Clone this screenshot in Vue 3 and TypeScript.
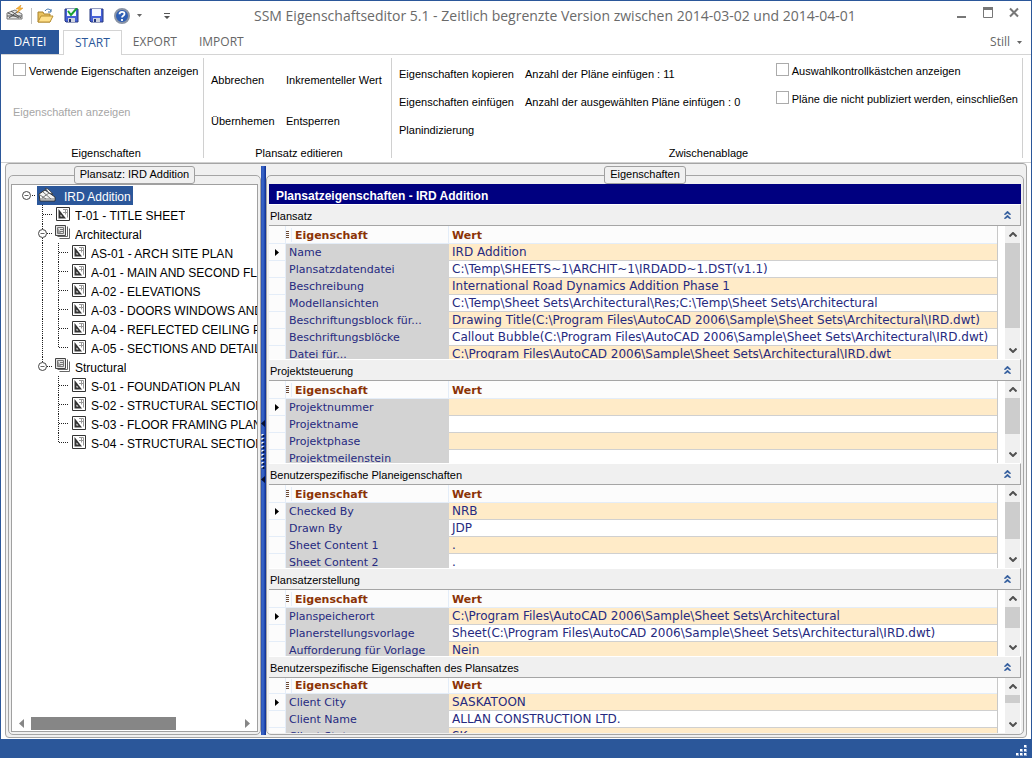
<script setup lang="ts">
import { ref } from 'vue'

type NodeKind = 'set' | 'folder' | 'sheet'

interface TreeNode {
  label: string
  kind: NodeKind
  depth: number
  trunk?: boolean
  last?: boolean
}

interface Section {
  title: string
  grow: number
  thumb: number
  rest: number
  compact?: boolean
  rows: [string, string][]
}

const nodes: TreeNode[] = [
  { label: 'IRD Addition', kind: 'set', depth: 0 },
  { label: 'T-01 - TITLE SHEET', kind: 'sheet', depth: 1 },
  { label: 'Architectural', kind: 'folder', depth: 1 },
  { label: 'AS-01 - ARCH SITE PLAN', kind: 'sheet', depth: 2, trunk: true },
  { label: 'A-01 - MAIN AND SECOND FLOOR PLAN', kind: 'sheet', depth: 2, trunk: true },
  { label: 'A-02 - ELEVATIONS', kind: 'sheet', depth: 2, trunk: true },
  { label: 'A-03 - DOORS WINDOWS AND ROOMS', kind: 'sheet', depth: 2, trunk: true },
  { label: 'A-04 - REFLECTED CEILING PLAN', kind: 'sheet', depth: 2, trunk: true },
  { label: 'A-05 - SECTIONS AND DETAILS', kind: 'sheet', depth: 2, trunk: true, last: true },
  { label: 'Structural', kind: 'folder', depth: 1, last: true },
  { label: 'S-01 - FOUNDATION PLAN', kind: 'sheet', depth: 2 },
  { label: 'S-02 - STRUCTURAL SECTIONS', kind: 'sheet', depth: 2 },
  { label: 'S-03 - FLOOR FRAMING PLAN', kind: 'sheet', depth: 2 },
  { label: 'S-04 - STRUCTURAL SECTIONS', kind: 'sheet', depth: 2, last: true },
]

const guideWidth = [25, 43, 59]
const selected = ref(0)

const sections: Section[] = [
  {
    title: 'Plansatz', grow: 133, thumb: 85, rest: 14,
    rows: [
      ['Name', 'IRD Addition'],
      ['Plansatzdatendatei', 'C:\\Temp\\SHEETS~1\\ARCHIT~1\\IRDADD~1.DST(v1.1)'],
      ['Beschreibung', 'International Road Dynamics Addition Phase 1'],
      ['Modellansichten', 'C:\\Temp\\Sheet Sets\\Architectural\\Res;C:\\Temp\\Sheet Sets\\Architectural'],
      ['Beschriftungsblock für...', 'Drawing Title(C:\\Program Files\\AutoCAD 2006\\Sample\\Sheet Sets\\Architectural\\IRD.dwt)'],
      ['Beschriftungsblöcke', 'Callout Bubble(C:\\Program Files\\AutoCAD 2006\\Sample\\Sheet Sets\\Architectural\\IRD.dwt)'],
      ['Datei für...', 'C:\\Program Files\\AutoCAD 2006\\Sample\\Sheet Sets\\Architectural\\IRD.dwt'],
    ],
  },
  {
    title: 'Projektsteuerung', grow: 82, thumb: 36, rest: 12,
    rows: [['Projektnummer', ''], ['Projektname', ''], ['Projektphase', ''], ['Projektmeilenstein', '']],
  },
  {
    title: 'Benutzerspezifische Planeigenschaften', grow: 83, thumb: 37, rest: 12,
    rows: [['Checked By', 'NRB'], ['Drawn By', 'JDP'], ['Sheet Content 1', '.'], ['Sheet Content 2', '.']],
  },
  {
    title: 'Plansatzerstellung', grow: 66, thumb: 21, rest: 11,
    rows: [
      ['Planspeicherort', 'C:\\Program Files\\AutoCAD 2006\\Sample\\Sheet Sets\\Architectural'],
      ['Planerstellungsvorlage', 'Sheet(C:\\Program Files\\AutoCAD 2006\\Sample\\Sheet Sets\\Architectural\\IRD.dwt)'],
      ['Aufforderung für Vorlage', 'Nein'],
    ],
  },
  {
    title: 'Benutzerspezifische Eigenschaften des Plansatzes', grow: 55, thumb: 8, rest: 13, compact: true,
    rows: [['Client City', 'SASKATOON'], ['Client Name', 'ALLAN CONSTRUCTION LTD.'], ['Client State', 'SK']],
  },
]
</script>

<template>
  <div class="window">
    <header class="titlebar">
      <div class="quick">
        <svg class="app-icon" width="18" height="16" viewBox="0 0 18 16" aria-hidden="true">
          <path d="M1 8 L9 5 L16 9 L16 14 L1 14 Z" fill="#e4e4e4" stroke="#777" />
          <path d="M1 11h15M2 8l11 5M5 6l10 7M3 13l8-6" stroke="#555" fill="none" />
          <path d="M15 0l-5 4h3l-2 4 6-5h-3z" fill="#f6b73c" stroke="#d98a1c" stroke-width=".5" />
        </svg>
        <span class="quick-sep"></span>
        <button aria-label="Öffnen">
          <svg width="17" height="16" viewBox="0 0 17 16">
            <path d="M1 14V4h5l1 2h6v8z" fill="#e9c25e" stroke="#a8812c" />
            <path d="M1 14l3-6h12l-3 6z" fill="#ffe08a" stroke="#b88f32" />
            <path d="M8 3c2-3 5-2 6 0m0-2v3h-3" fill="none" stroke="#3b6ea5" />
          </svg>
        </button>
        <button aria-label="Speichern und prüfen">
          <svg width="15" height="15" viewBox="0 0 15 15">
            <path d="M1 1h13v13H2L1 13z" fill="#4560d8" stroke="#26387e" />
            <path d="M3 1h9v7H3z" fill="#f4f6ff" /><path d="M4 10h7v4H4z" fill="#cfd3de" /><path d="M5 11h2v3H5z" fill="#20306e" />
            <path d="M4 3l3 4 6-7" fill="none" stroke="#18a030" stroke-width="2" />
          </svg>
        </button>
        <button aria-label="Speichern">
          <svg width="15" height="15" viewBox="0 0 15 15">
            <path d="M1 1h13v13H2L1 13z" fill="#4560d8" stroke="#26387e" />
            <path d="M3 1h9v7H3z" fill="#f4f6ff" /><path d="M4 10h7v4H4z" fill="#cfd3de" /><path d="M5 11h2v3H5z" fill="#26387e" />
          </svg>
        </button>
        <button aria-label="Hilfe">
          <svg width="16" height="16" viewBox="0 0 16 16">
            <circle cx="8" cy="8" r="7" fill="#2f5fb5" stroke="#8a94a6" stroke-width="2" />
            <path d="M5.500 6.300c0-3.300 5-3.300 5-.3 0 1.800-2.500 1.800-2.500 3.500M8 11v2" fill="none" stroke="#fff" stroke-width="1.800" />
          </svg>
        </button>
        <button class="drop" aria-label="Hilfemenü">
          <svg width="5" height="3" viewBox="0 0 5 3"><path d="M0 0h5L2.500 3z" fill="#666" /></svg>
        </button>
        <button class="drop customise" aria-label="Schnellzugriff anpassen">
          <svg width="6" height="6" viewBox="0 0 6 6"><path d="M0 0h6v1H0zM0 3h6L3 6z" fill="#555" /></svg>
        </button>
      </div>
      <h1>SSM Eigenschaftseditor 5.1 - Zeitlich begrenzte Version zwischen 2014-03-02 und 2014-04-01</h1>
      <div class="window-buttons">
        <button aria-label="Minimieren"><svg width="10" height="11" viewBox="0 0 10 11"><path d="M0 9h9v2H0z" fill="#777" /></svg></button>
        <button aria-label="Maximieren"><svg width="10" height="11" viewBox="0 0 10 11"><path d="M.5 1v9.500h9V1" fill="none" stroke="#777" /><path d="M0 0h10v3H0z" fill="#777" /></svg></button>
        <button aria-label="Schließen"><svg width="10" height="11" viewBox="0 0 10 11"><path d="M1 1.500l8 8m0-8l-8 8" stroke="#777" stroke-width="2" /></svg></button>
      </div>
    </header>

    <nav class="tabs">
      <button class="file">DATEI</button>
      <button class="active">START</button>
      <button>EXPORT</button>
      <button>IMPORT</button>
      <button class="style">Still <svg width="5" height="3" viewBox="0 0 5 3"><path d="M0 0h5L2.500 3z" fill="#666" /></svg></button>
    </nav>

    <div class="ribbon">
      <section class="group group-view">
        <div class="commands">
          <label><input type="checkbox" />Verwende Eigenschaften anzeigen</label>
          <button disabled>Eigenschaften anzeigen</button>
        </div>
        <h2>Eigenschaften</h2>
      </section>
      <section class="group group-edit">
        <div class="commands">
          <button>Abbrechen</button><button>Inkrementeller Wert</button>
          <button>Übernhemen</button><button>Entsperren</button>
        </div>
        <h2>Plansatz editieren</h2>
      </section>
      <section class="group group-clip">
        <div class="commands">
          <div class="pairs">
            <button>Eigenschaften kopieren</button><span>Anzahl der Pläne einfügen : 11</span>
            <button>Eigenschaften einfügen</button><span>Anzahl der ausgewählten Pläne einfügen : 0</span>
            <button>Planindizierung</button>
          </div>
          <div class="checks">
            <label><input type="checkbox" />Auswahlkontrollkästchen anzeigen</label>
            <label><input type="checkbox" />Pläne die nicht publiziert werden, einschließen</label>
          </div>
        </div>
        <h2>Zwischenablage</h2>
      </section>
    </div>

    <main class="workspace">
      <fieldset class="pane tree-pane">
        <legend>Plansatz: IRD Addition</legend>
        <div class="tree-box">
          <ul class="tree">
            <li v-for="(node, i) in nodes" :key="node.label">
              <svg class="guides" :width="guideWidth[node.depth]" height="19" aria-hidden="true">
                <g stroke="#222" stroke-dasharray="1 1" fill="none">
                  <path v-if="node.depth === 0" d="M20 9.500h4" />
                  <template v-else-if="node.depth === 1">
                    <path :d="node.kind === 'folder' ? 'M35 9.500h5' : 'M31 9.500h10'" />
                    <path :d="node.last ? 'M30.500 0v5' : 'M30.500 0v19'" />
                  </template>
                  <template v-else>
                    <path v-if="node.trunk" d="M30.500 0v19" />
                    <path :d="node.last ? 'M46.500 0v10' : 'M46.500 0v19'" />
                    <path d="M47 9.500h10" />
                  </template>
                </g>
                <g v-if="node.kind !== 'sheet'" :transform="node.depth === 0 ? 'translate(14.500 9.500)' : 'translate(30.500 9.500)'">
                  <circle r="4" fill="#fff" stroke="#444" /><path d="M-2 0h4" stroke="#666" />
                </g>
              </svg>
              <button class="node" :class="{ selected: selected === i }" @click="selected = i">
                <svg v-if="node.kind === 'set'" class="set-icon" width="18" height="15" viewBox="0 0 18 15">
                  <path d="M1 6l6-4 10 7v4H2z" fill="#f4f4f4" stroke="#333" />
                  <path d="M2 11h14M2 7l6 4M5 4l8 7M4 10l7-5" stroke="#777" fill="none" />
                  <path d="M7 0l3 1 5 5-4-1z" fill="#fff" stroke="#333" stroke-width=".7" />
                </svg>
                <svg v-else-if="node.kind === 'folder'" class="folder-icon" width="16" height="15" viewBox="0 0 16 15">
                  <path d="M4.500 13.500h10v-10M2.500 11.500h10v-10" fill="none" stroke="#666" />
                  <path d="M.5.500h10v10H.5z" fill="#e4e4e4" stroke="#444" />
                  <path d="M3 3v5h3z" fill="#999" /><path d="M2.500 2.500h6v6h-6zM5 4.500h3M5 6.500h3" stroke="#777" fill="none" />
                </svg>
                <svg v-else width="14" height="14" viewBox="0 0 14 14">
                  <path d="M.5.500h13v13H.5z" fill="#fff" stroke="#333" />
                  <path d="M2.500 2v9.500H10z" fill="#333" /><path d="M4.500 7.500v2h2z" fill="#fff" />
                  <path d="M7 2.500h4.500v8M9.500 2.500v5M7 5.500h5" stroke="#999" fill="none" />
                </svg>
                <span>{{ node.label }}</span>
              </button>
            </li>
          </ul>
          <div class="hscroll">
            <button aria-label="Nach links"><svg width="5" height="9" viewBox="0 0 5 9"><path d="M5 0v9L0 4.500z" fill="#868686" /></svg></button>
            <div class="htrack"><div class="hthumb"></div></div>
            <button aria-label="Nach rechts"><svg width="5" height="9" viewBox="0 0 5 9"><path d="M0 0v9l5-4.500z" fill="#868686" /></svg></button>
          </div>
        </div>
      </fieldset>

      <div class="splitter">
        <svg width="5" height="64" viewBox="0 0 5 64" aria-hidden="true">
          <path d="M4 1v7L0 4.500zM4 57v7L0 60.500z" fill="#081030" />
          <path d="M1.500 15v34" stroke="#fff" stroke-width="2" stroke-dasharray="2 2" />
          <path d="M2.500 16v34" stroke="#081848" stroke-width="2" stroke-dasharray="2 2" />
        </svg>
      </div>

      <fieldset class="pane props-pane">
        <legend>Eigenschaften</legend>
        <h2 class="props-title">Plansatzeigenschaften - IRD Addition</h2>
        <template v-for="s in sections" :key="s.title">
          <div class="section-head">
            <h3>{{ s.title }}</h3>
            <button :aria-label="s.title + ' einklappen'">
              <svg width="7" height="8" viewBox="0 0 7 8"><path d="M3.500 0L7 3.500H5L3.500 2 2 3.500H0zM3.500 4L7 7.500H5L3.500 6 2 7.500H0z" fill="#2b579a" stroke="#2b579a" stroke-width=".4" /></svg>
            </button>
          </div>
          <div class="section-body" :style="{ flexGrow: s.grow }">
            <div class="grid">
              <table :class="{ compact: s.compact }">
                <colgroup><col class="c-mark" /><col class="c-name" /><col /></colgroup>
                <thead>
                  <tr>
                    <th></th>
                    <th class="name-head">
                      <span class="sort"><svg width="3" height="8" viewBox="0 0 3 8"><path d="M0 .5h3M0 2.500h3M0 4.500h3M0 6.500h3" stroke="#6b4a35" /></svg></span>Eigenschaft
                    </th>
                    <th>Wert</th>
                  </tr>
                </thead>
                <tbody>
                  <tr v-for="(row, r) in s.rows" :key="row[0]">
                    <td class="mark"><svg v-if="r === 0" width="4" height="7" viewBox="0 0 4 7"><path d="M0 0v7l4-3.500z" fill="#000" /></svg></td>
                    <td class="name">{{ row[0] }}</td>
                    <td class="value">{{ row[1] }}</td>
                  </tr>
                </tbody>
              </table>
            </div>
            <div class="vscroll">
              <button aria-label="Nach oben"><svg width="8" height="5" viewBox="0 0 8 5"><path d="M.5 4.500L4 1l3.500 3.500" fill="none" stroke="#505050" stroke-width="2" /></svg></button>
              <div class="vtrack">
                <div class="vthumb" :style="{ flexGrow: s.thumb }"></div>
                <div :style="{ flexGrow: s.rest }"></div>
              </div>
              <button aria-label="Nach unten"><svg width="8" height="5" viewBox="0 0 8 5"><path d="M.5.500L4 4 7.500.500" fill="none" stroke="#505050" stroke-width="2" /></svg></button>
            </div>
          </div>
        </template>
      </fieldset>
    </main>

    <footer class="statusbar">
      <svg width="12" height="12" viewBox="0 0 12 12" aria-hidden="true">
        <path d="M8 0h3v3H8zM8 4h3v3H8zM4 4h3v3H4zM8 8h3v3H8zM4 8h3v3H4zM0 8h3v3H0z" fill="#8fa6cc" />
        <path d="M8 0h2v2H8zM8 4h2v2H8zM4 4h2v2H4zM8 8h2v2H8zM4 8h2v2H4zM0 8h2v2H0z" fill="#fff" />
      </svg>
    </footer>
  </div>
</template>

<style>
body {
  margin: 0;
}
</style>

<style scoped>
* {
  box-sizing: border-box;
}
.window {
  height: 100vh;
  min-height: 600px;
  display: flex;
  flex-direction: column;
  border: 1px solid #2b579a;
  border-bottom: 0;
  background: #fff;
  font: 11px/14px "Liberation Sans", Arial, sans-serif;
  color: #000;
  overflow: hidden;
}
button {
  font: inherit;
  color: inherit;
  background: none;
  border: 0;
  padding: 0;
  margin: 0;
  text-align: left;
  white-space: nowrap;
}
h1,
h2,
h3 {
  margin: 0;
  font: inherit;
}
svg {
  display: block;
  flex: none;
}

.titlebar {
  flex: none;
  height: 29px;
  display: flex;
  align-items: center;
  justify-content: space-between;
  padding: 0 12px 0 5px;
}
.quick {
  display: flex;
  align-items: center;
  gap: 10px;
  width: 248px;
}
.app-icon {
  margin: 0 -3px 6px 0;
}
.quick-sep {
  width: 1px;
  height: 16px;
  margin-right: -5px;
  background: #c0c0c0;
}
.drop {
  margin-left: -3px;
}
.customise {
  margin-left: 12px;
}
h1 {
  flex: 1;
  font: 14px/20px "Open Sans", "Noto Sans", sans-serif;
  color: #6a6a6a;
  white-space: nowrap;
}
.window-buttons {
  display: flex;
  gap: 16px;
  margin-bottom: 6px;
}

.tabs {
  flex: none;
  height: 25px;
  display: flex;
  border-bottom: 1px solid #d4d4d4;
  font: 12px/24px "Open Sans", "Noto Sans", sans-serif;
  color: #666;
}
.tabs button {
  height: 24px;
  padding: 0 11px;
}
.tabs .file {
  width: 58px;
  padding: 0;
  text-align: center;
  background: #2b579a;
  color: #fff;
}
.tabs .active {
  height: 25px;
  margin-left: 4px;
  border: 1px solid #d4d4d4;
  border-bottom: 0;
  background: #fff;
  color: #2b579a;
}
.tabs .style {
  margin-left: auto;
  padding: 0 9px;
  display: flex;
  align-items: center;
  gap: 7px;
}

.ribbon {
  flex: none;
  height: 108px;
  display: flex;
  padding: 3px 8px 4px 0;
  border-bottom: 1px solid #d0d0d0;
}
.group {
  display: flex;
  flex-direction: column;
  border-right: 1px solid #d0d0d0;
}
.group h2 {
  margin-top: auto;
  padding-left: 3px;
  line-height: 10px;
  text-align: center;
}
.group-view {
  width: 203px;
  flex: none;
}
.group-view h2 {
  padding-left: 8px;
}
.group-edit {
  width: 188px;
  flex: none;
}
.group-clip {
  flex: 1;
}
.group-view .commands {
  display: flex;
  flex-direction: column;
  align-items: flex-start;
  gap: 26px;
  padding: 5px 0 0 12px;
}
.group-edit .commands {
  display: grid;
  grid-template-columns: 75px auto;
  justify-content: start;
  row-gap: 27px;
  padding: 15px 0 0 7px;
}
.group-clip .commands {
  display: flex;
  justify-content: space-between;
  padding: 5px 4px 0 7px;
}
.pairs {
  display: grid;
  grid-template-columns: 126px auto;
  row-gap: 14px;
  padding-top: 4px;
  white-space: nowrap;
}
.checks {
  display: flex;
  flex-direction: column;
  gap: 12px;
}
.ribbon label {
  display: flex;
  align-items: center;
  height: 16px;
  white-space: nowrap;
}
.ribbon button:disabled {
  color: #a6a6a6;
}
input[type="checkbox"] {
  appearance: none;
  width: 13px;
  height: 13px;
  margin: 0 3px 3px 0;
  border: 1px solid #ababab;
  background: #fff;
}

.workspace {
  flex: 1;
  min-height: 0;
  display: flex;
  margin: 0 4px 1px;
  padding: 2px;
  border: 1px solid #a5a5a5;
  border-radius: 4px;
  background: #f0f0f0;
}
.pane {
  min-width: 0;
  margin: 0;
  padding: 0 2px 2px;
  border: 1px solid #a5a5a5;
  border-radius: 5px;
  display: flex;
  flex-direction: column;
}
legend {
  height: 18px;
  margin: 0 auto;
  padding: 0 5px;
  border: 1px solid #a0a0a0;
  border-radius: 3px;
  background: #f0f0f0;
}
.tree-pane {
  width: 253px;
  flex: none;
}
.props-pane {
  flex: 1;
  padding: 0 2px 1px;
}
.tree-box {
  flex: 1;
  min-height: 0;
  display: flex;
  flex-direction: column;
  border: 1px solid #a0a0a0;
  background: #fff;
}
.tree {
  flex: 1;
  min-height: 0;
  margin: 0;
  padding: 1px 0 0;
  list-style: none;
  overflow: hidden;
  font-size: 12px;
}
.tree li {
  height: 19px;
  display: flex;
}
.node {
  display: flex;
  align-items: center;
  gap: 5px;
  min-width: 0;
  height: 19px;
  padding: 0 0 0 1px;
}
.node svg {
  margin-bottom: 2px;
}
.node span {
  min-width: 0;
  padding: 2px 0 0;
  overflow: hidden;
}
.node.selected {
  padding-right: 2px;
  background: #2b579a;
  color: #fff;
}
.node .set-icon {
  margin: 0 3px 0 0;
}
.node .folder-icon {
  margin: 0 -1px 2px -1px;
}
.hscroll {
  flex: none;
  height: 16px;
  display: flex;
  align-items: center;
  gap: 7px;
  padding: 0 7px;
}
.htrack {
  flex: 1;
}
.hthumb {
  width: 70%;
  height: 13px;
  background: #868686;
}

.splitter {
  width: 5px;
  flex: none;
  display: flex;
  align-items: center;
  background: linear-gradient(90deg, #2a50b0, #3a68cc 40%, #0c2c90);
}

.props-title {
  flex: none;
  height: 20px;
  padding: 0 7px;
  background: #000080;
  color: #fff;
  font: bold 12px/24px "Liberation Sans", Arial, sans-serif;
}
.section-head {
  flex: none;
  height: 22px;
  display: flex;
  align-items: center;
  justify-content: space-between;
  padding: 0 9px 0 1px;
  border: 1px solid #a5a5a5;
  border-width: 1px 1px 1px 0;
  border-top-color: #fff;
}
.section-head h3 {
  padding-top: 2px;
}
.section-body {
  flex: 1 1 0;
  min-height: 0;
  display: flex;
  gap: 7px;
  padding-right: 1px;
  overflow: hidden;
  background: #fff;
}
.grid {
  flex: 1;
  min-width: 0;
  overflow: hidden;
  border-right: 1px solid #c8c8c8;
}
table {
  width: 100%;
  table-layout: fixed;
  border-collapse: separate;
  border-spacing: 0;
  font: 11px/15px "DejaVu Sans", Verdana, sans-serif;
  color: #262a80;
}
.c-mark {
  width: 17px;
}
.c-name {
  width: 163px;
}
th,
td {
  height: 17px;
  padding: 1px 3px 0;
  text-align: left;
  white-space: nowrap;
  overflow: hidden;
}
th {
  height: 18px;
  border-right: 1px solid #e4edf8;
  border-bottom: 1px solid #e4edf8;
  background: #fcfcfc;
  color: #8b3306;
}
.compact th {
  height: 16px;
  line-height: 14px;
}
th:last-child {
  border-right: 0;
}
.name-head {
  padding-left: 0;
}
.sort {
  display: inline-block;
  width: 6px;
  height: 14px;
  margin-right: 3px;
  padding-top: 3px;
  border-right: 1px solid #e4edf8;
  vertical-align: top;
}
.mark {
  padding: 0 0 0 6px;
  border-right: 1px solid #e4edf8;
  border-bottom: 1px solid #e4edf8;
  background: #fcfcfc;
}
.name {
  border-bottom: 1px solid #d3d3d3;
  background: #d3d3d3;
}
.value {
  border-bottom: 1px solid #d0d0d0;
  background: #fff;
  font-size: 12px;
}
tbody tr:nth-child(odd) .value {
  background: #ffebc8;
}
.vscroll {
  width: 15px;
  flex: none;
  display: flex;
  flex-direction: column;
  background: #f0f0f0;
}
.vscroll button {
  flex: none;
  height: 17px;
  display: flex;
  align-items: center;
  justify-content: center;
}
.vtrack {
  flex: 1;
  display: flex;
  flex-direction: column;
}
.vthumb {
  background: #cdcdcd;
}

.statusbar {
  flex: none;
  height: 19px;
  display: flex;
  align-items: center;
  justify-content: flex-end;
  padding: 4px 3px 0;
  background: #2b579a;
}
</style>
